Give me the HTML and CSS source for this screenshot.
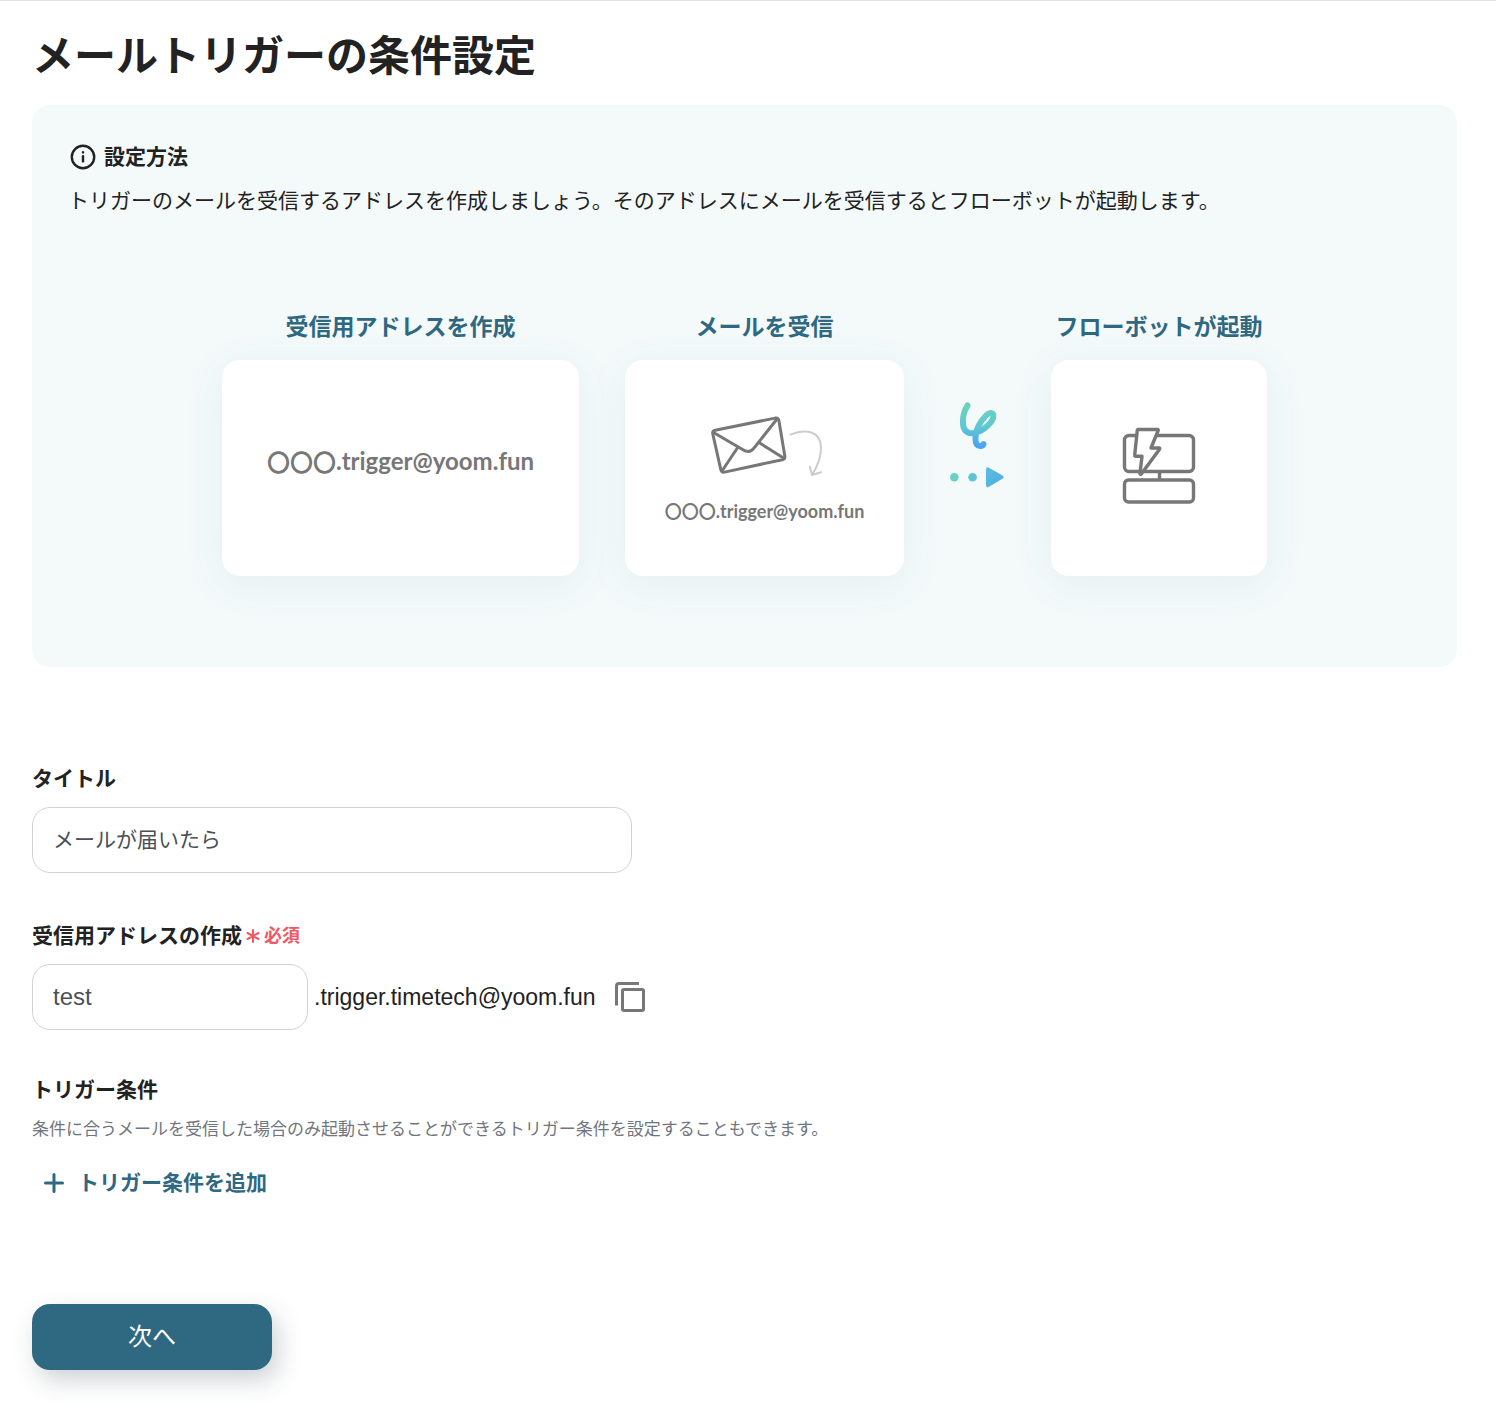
FILE: index.html
```html
<!DOCTYPE html>
<html lang="ja">
<head>
<meta charset="utf-8">
<meta name="viewport" content="width=device-width, initial-scale=1">
<title>メールトリガーの条件設定</title>
<link rel="stylesheet" href="styles.css">
</head>
<body>
<main class="page">
  <h1 class="page-title">メールトリガーの条件設定</h1>

  <section class="guide">
    <h2 class="guide-heading">
      <svg class="icon-info" viewBox="0 0 30 30" aria-hidden="true"><circle cx="15" cy="15" r="11.2"/><path d="M15 14.2v5.2"/><path d="M15 10.3v.1"/></svg>
      設定方法
    </h2>
    <p class="guide-text">トリガーのメールを受信するアドレスを作成しましょう。そのアドレスにメールを受信するとフローボットが起動します。</p>

    <div class="steps">
      <figure class="step">
        <figcaption class="step-caption">受信用アドレスを作成</figcaption>
        <div class="card card-address">
          <p class="sample"><span class="sample-mask">〇〇〇</span>.trigger@yoom.fun</p>
        </div>
      </figure>
      <figure class="step">
        <figcaption class="step-caption">メールを受信</figcaption>
        <div class="card card-mail">
          <svg class="mail-art" viewBox="-10 0 140 90" aria-hidden="true">
            <g class="mail-lines">
              <path d="M10.200 30.200 70.200 18.100Q73.200 17.600 73.900 20.500L79.800 56Q80.300 59 77.400 59.700L19.600 72.100Q16.500 72.600 15.800 69.700L7.800 34Q7.200 30.800 10.200 30.200Z"/>
              <path d="M8.500 32.500 38 49.700Q45 54.200 49.700 47.200L72 19"/>
              <path d="M32.700 47.500 17 71M54.100 42.600 78.500 58"/>
            </g>
            <path class="mail-arrow" d="M85.500 34.700C101 28 115.500 31.500 116 47C116.200 58 112 67 107.300 74.500M104.800 66.700 107 75 116 72.300"/>
          </svg>
          <p class="sample sample-small"><span class="sample-mask">〇〇〇</span>.trigger@yoom.fun</p>
        </div>
      </figure>
      <svg class="flow-mark" viewBox="0 0 55 88" aria-hidden="true">
        <defs>
          <linearGradient id="mark" x1="0" y1="0" x2="0" y2="1"><stop offset="0" stop-color="#68d3bd"/><stop offset=".5" stop-color="#60c9d2"/><stop offset="1" stop-color="#4aa5f0"/></linearGradient>
          <linearGradient id="tri" x1="0" y1="0" x2="1" y2="1"><stop offset="0" stop-color="#59bddb"/><stop offset="1" stop-color="#4faee8"/></linearGradient>
        </defs>
        <path class="mark-stroke" d="M17.500 4.500C13 11 12.300 20 13.200 25C14.500 31.500 20.500 33.500 26 31.500C34 29.500 42.800 21 43.300 16C43.800 11.500 40 11 36.500 14C30.500 20 25.500 28 25.500 37C25.200 43 27.500 45.500 31 45Q33 44.800 33.500 43.200"/>
        <circle cx="4.300" cy="76.300" r="4.300" fill="#68d1c4"/>
        <circle cx="22.600" cy="76.300" r="4.300" fill="#5fc5d3"/>
        <path d="M36 68.500Q36 65.200 39 66.800L52.500 74.600Q54.800 76.200 52.500 77.800L39 85.800Q36 87.400 36 84Z" fill="url(#tri)"/>
      </svg>
      <figure class="step">
        <figcaption class="step-caption">フローボットが起動</figcaption>
        <div class="card card-bot">
          <svg class="bot-art" viewBox="-1 0 100 100" aria-hidden="true">
            <rect x="14.500" y="20.500" width="69" height="36" rx="4.500"/>
            <rect x="14.500" y="65" width="69" height="22" rx="4"/>
            <path d="M49.500 57v7"/>
            <path class="bolt" d="M28.500 14.500H47.500Q48.500 14.500 48.200 15.500L41 33H49.500Q50 33.300 49.500 34.200L31.300 59Q30 59.800 30 58.200L32 41.200H25.200Q24.600 41 24.700 40.200L27.200 15.800Q27.300 14.500 28.500 14.500Z"/>
          </svg>
        </div>
      </figure>
    </div>
  </section>

  <form class="form">
    <div class="field">
      <label class="label" for="title">タイトル</label>
      <input class="input input-title" id="title" type="text" value="メールが届いたら">
    </div>
    <div class="field field-address">
      <label class="label" for="address">受信用アドレスの作成<span class="required"><svg class="icon-star" viewBox="0 0 14 14" aria-hidden="true"><path d="M7 1v12M1.500 4 12.500 10M12.500 4 1.500 10"/></svg>必須</span></label>
      <div class="address-row">
        <input class="input input-address" id="address" type="text" value="test">
        <span class="domain">.trigger.timetech@yoom.fun</span>
        <button class="copy" type="button" aria-label="コピー"><svg class="icon-copy" viewBox="0 0 32 32" aria-hidden="true"><path d="M2.500 24.500V5Q2.500 2.500 5 2.500H25"/><rect x="8.500" y="8.500" width="21" height="21" rx="1.500"/></svg></button>
      </div>
    </div>
    <section class="field conditions">
      <h2 class="label">トリガー条件</h2>
      <p class="hint">条件に合うメールを受信した場合のみ起動させることができるトリガー条件を設定することもできます。</p>
      <button class="add" type="button"><svg class="icon-plus" viewBox="0 0 20 20" aria-hidden="true"><path d="M10 1.500v17M1.500 10h17"/></svg>トリガー条件を追加</button>
    </section>
    <button class="submit" type="submit">次へ</button>
  </form>
</main>
</body>
</html>
```

FILE: styles.css
```css
* {
  box-sizing: border-box;
}

body {
  margin: 0;
  background: #fff;
  color: #222;
  font-family: "Liberation Sans", "Noto Sans CJK JP", sans-serif;
  font-size: 21px;
  line-height: 32px;
}

h1, h2, p, figure {
  margin: 0;
}

button, input {
  font: inherit;
}

button {
  padding: 0;
  border: 0;
  background: none;
  cursor: pointer;
}

svg {
  display: block;
  flex: none;
  fill: none;
  stroke-linecap: round;
  stroke-linejoin: round;
}

.page {
  padding: 28px 39px 40px 32px;
  border-top: 1px solid #e2e2e2;
}

.page-title {
  margin-bottom: 20px;
  font-size: 42px;
  line-height: 56px;
  font-weight: 700;
}

/* Guide panel */
.guide {
  padding: 36px 36px 91px;
  border-radius: 18px;
  background: #f4fafa;
}

.guide-heading {
  display: flex;
  align-items: center;
  gap: 6px;
  margin-bottom: 12px;
  font-size: 21px;
  font-weight: 700;
}

.icon-info {
  width: 30px;
  height: 30px;
  stroke: #222;
  stroke-width: 2.4;
}

.steps {
  display: flex;
  justify-content: center;
  align-items: flex-end;
  gap: 46px;
  margin-top: 94px;
}

.step {
  display: flex;
  flex-direction: column;
  align-items: center;
  gap: 17px;
}

.step-caption {
  color: #2f6881;
  font-size: 23px;
  font-weight: 700;
  white-space: nowrap;
}

.card {
  display: flex;
  flex-direction: column;
  align-items: center;
  justify-content: center;
  height: 216px;
  border-radius: 18px;
  background: #fff;
  box-shadow: 0 8px 40px rgba(47, 104, 129, 0.08);
}

.card-address {
  width: 357px;
  padding-bottom: 14px;
}

.card-mail {
  width: 279px;
  padding-bottom: 9px;
}

.card-bot {
  width: 216px;
  padding-bottom: 6px;
}

.sample {
  display: flex;
  align-items: center;
  color: #777;
  font-family: Lato, sans-serif;
  font-size: 24px;
  font-weight: 700;
  white-space: nowrap;
}

.sample-mask {
  font-family: "Noto Sans CJK JP", sans-serif;
  font-size: 23px;
}

.sample-small {
  font-size: 18px;
}

.sample-small .sample-mask {
  font-size: 17px;
}

.mail-art {
  width: 140px;
  height: 90px;
  margin-bottom: 5px;
}

.mail-lines {
  stroke: #777;
  stroke-width: 3;
}

.mail-arrow {
  stroke: #ccc;
  stroke-width: 2;
}

.flow-mark {
  width: 55px;
  height: 88px;
  margin-bottom: 87px;
}

.mark-stroke {
  stroke: url(#mark);
  stroke-width: 6;
}

.bot-art {
  width: 100px;
  height: 100px;
  stroke: #777;
  stroke-width: 3.4;
}

.bolt {
  fill: #fff;
}

/* Form */
.form {
  display: flex;
  flex-direction: column;
  align-items: flex-start;
  gap: 44px;
  margin-top: 96px;
}

.field {
  display: flex;
  flex-direction: column;
  align-items: flex-start;
  gap: 12px;
}

.field-address {
  margin-top: 3px;
}

.label {
  display: flex;
  align-items: center;
  font-size: 21px;
  font-weight: 700;
}

.required {
  display: flex;
  align-items: center;
  gap: 4px;
  margin-left: 4px;
  color: #ee5964;
  font-size: 18px;
}

.icon-star {
  width: 14px;
  height: 14px;
  stroke: currentColor;
  stroke-width: 2;
}

.input {
  height: 66px;
  padding: 0 20px 4px;
  border: 1px solid #cfd2d7;
  border-radius: 18px;
  background: #fff;
  color: #4b4f56;
}

.input-title {
  width: 600px;
  max-width: 100%;
}

.input-address {
  width: 276px;
  padding-bottom: 0;
  font-size: 24px;
}

.address-row {
  display: flex;
  align-items: center;
}

.domain {
  margin-left: 6px;
  font-size: 23px;
}

.copy {
  margin-left: 18px;
}

.icon-copy {
  width: 32px;
  height: 32px;
  stroke: #777;
  stroke-width: 3;
  stroke-linecap: butt;
}

.hint {
  color: #70757d;
  font-size: 17px;
  line-height: 24px;
}

.add {
  display: flex;
  align-items: center;
  gap: 14px;
  margin: 13px 0 0 12px;
  color: #2f6881;
  font-weight: 700;
}

.icon-plus {
  width: 20px;
  height: 20px;
  stroke: currentColor;
  stroke-width: 3;
}

.submit {
  width: 240px;
  height: 66px;
  margin-top: 61px;
  border-radius: 18px;
  background: #2f6881;
  box-shadow: 6px 10px 24px rgba(34, 50, 60, 0.22);
  color: #fff;
  font-size: 24px;
}
```
